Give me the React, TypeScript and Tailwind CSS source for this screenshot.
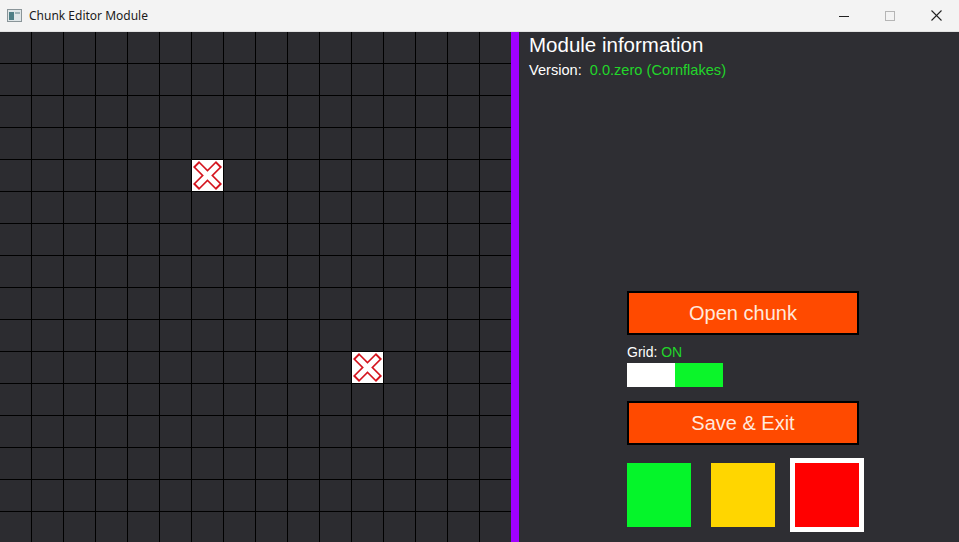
import React from "react";

const COLS = 16;
const ROWS = 16;
const marked = [
  [4, 6],
  [10, 11],
];

const Cell = ({ mark }: { mark: boolean }) => (
  <div className="w-[32px] h-[32px] border-r border-b border-black bg-[#2c2c30]">
    {mark && (
      <svg width="31" height="31" viewBox="0 0 31 31" className="block bg-white">
        <line x1="4" y1="4" x2="27" y2="27" stroke="#d4141e" strokeWidth="8.5" />
        <line x1="27" y1="4" x2="4" y2="27" stroke="#d4141e" strokeWidth="8.5" />
        <line x1="5.4" y1="5.4" x2="25.6" y2="25.6" stroke="#fff" strokeWidth="5.2" />
        <line x1="25.6" y1="5.4" x2="5.4" y2="25.6" stroke="#fff" strokeWidth="5.2" />
      </svg>
    )}
  </div>
);

const TitleBar = () => (
  <div className="h-[32px] shrink-0 flex items-center bg-[#f3f3f3] border-b border-[#e2e2e2] text-[12px] text-[#1b1b1b]">
    <svg width="15" height="13" viewBox="0 0 15 13" className="ml-[7px]">
      <rect x="0.5" y="0.5" width="14" height="12" fill="#dfe6e8" stroke="#8a9599" />
      <rect x="2" y="3" width="5" height="8" fill="#4f7f86" />
      <rect x="8" y="3" width="5" height="2" fill="#9fb4b8" />
    </svg>
    <span className="ml-[7px]" style={{ fontFamily: "'Noto Sans', sans-serif" }}>
      Chunk Editor Module
    </span>
    <div className="ml-auto flex items-center h-full">
      <div className="w-[46px] h-full flex items-center justify-center">
        <svg width="10" height="10" viewBox="0 0 10 10">
          <line x1="0" y1="5.5" x2="10" y2="5.5" stroke="#222" strokeWidth="1" />
        </svg>
      </div>
      <div className="w-[46px] h-full flex items-center justify-center">
        <svg width="10" height="10" viewBox="0 0 10 10">
          <rect x="0.5" y="0.5" width="9" height="9" fill="none" stroke="#b5b5b5" strokeWidth="1" />
        </svg>
      </div>
      <div className="w-[46px] h-full flex items-center justify-center">
        <svg width="11" height="11" viewBox="0 0 11 11">
          <line x1="0.5" y1="0.5" x2="10.5" y2="10.5" stroke="#222" strokeWidth="1.1" />
          <line x1="10.5" y1="0.5" x2="0.5" y2="10.5" stroke="#222" strokeWidth="1.1" />
        </svg>
      </div>
    </div>
  </div>
);

export default function App() {
  return (
    <div
      className="w-[959px] h-[542px] flex flex-col overflow-hidden bg-[#2c2c30]"
      style={{ fontFamily: "'Liberation Sans', Arial, sans-serif" }}
    >
      <TitleBar />
      <div className="flex flex-1 min-h-0">
        <div className="w-[511px] h-full overflow-hidden">
          <div className="grid grid-cols-[repeat(16,32px)] w-[512px]">
            {Array.from({ length: ROWS * COLS }).map((_, i) => {
              const r = Math.floor(i / COLS);
              const c = i % COLS;
              const mark = marked.some(([mr, mc]) => mr === r && mc === c);
              return <Cell key={i} mark={mark} />;
            })}
          </div>
        </div>
        <div className="w-[8px] h-full bg-[#a000ff]" />
        <div className="flex-1 flex flex-col pl-[10px] pt-[1px] bg-[#2e2e33] text-white">
          <div className="text-[20.5px] leading-[24px]">Module information</div>
          <div className="mt-[5px] text-[14.6px] leading-[16px]">
            Version:<span className="ml-[8px] text-[#22d62a]">0.0.zero (Cornflakes)</span>
          </div>
          <div className="ml-[98px] mt-[213px] flex flex-col">
            <button className="w-[232px] h-[44px] border-2 border-black bg-[#ff4a00] text-[20px] text-[#ffe8dc]">
              Open chunk
            </button>
            <div className="mt-[9px] text-[14px] leading-[16px]">
              Grid: <span className="text-[#22d62a]">ON</span>
            </div>
            <div className="mt-[3px] flex w-[96px] h-[24px]">
              <div className="w-[48px] bg-white" />
              <div className="w-[48px] bg-[#0bf52a]" />
            </div>
            <button className="mt-[14px] w-[232px] h-[44px] border-2 border-black bg-[#ff4a00] text-[20px] text-[#ffe8dc]">
              Save &amp; Exit
            </button>
            <div className="mt-[13px] flex items-center">
              <div className="w-[64px] h-[64px] bg-[#05f52a]" />
              <div className="ml-[20px] w-[64px] h-[64px] bg-[#ffd600]" />
              <div className="ml-[15px] w-[74px] h-[74px] border-[5px] border-white bg-[#ff0000]" />
            </div>
          </div>
        </div>
      </div>
    </div>
  );
}
